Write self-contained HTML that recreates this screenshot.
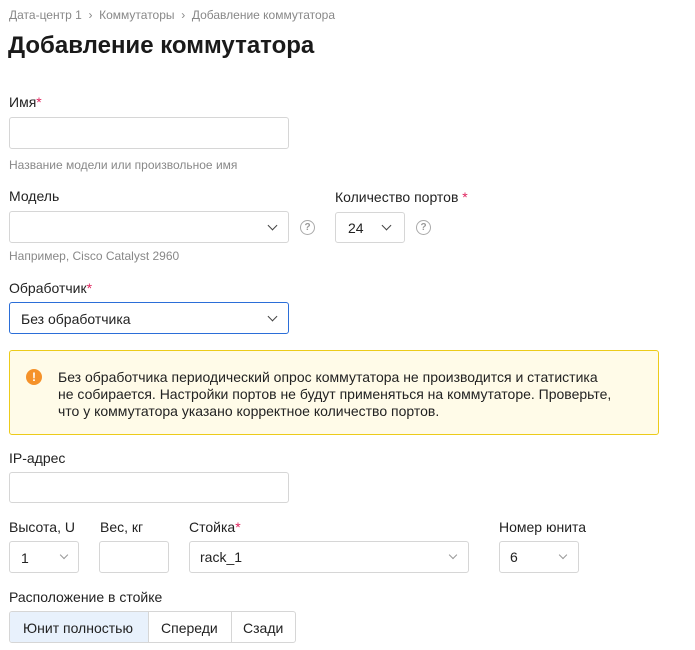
<!DOCTYPE html>
<html><head><meta charset="utf-8"><style>
*{box-sizing:border-box;margin:0;padding:0}
body{width:695px;height:650px;background:#fff;font-family:"Liberation Sans","DejaVu Sans",sans-serif;color:#222;position:relative;overflow:hidden}
.a{position:absolute;white-space:nowrap}
.lbl{font-size:14px;color:#222}
.req{color:#e0245e}
.hint{font-size:12px;color:#888}
.box{position:absolute;border:1px solid #d6d6d6;border-radius:3px;background:#fff}
.chev{position:absolute;width:7px;height:7px;border-right:1.1px solid #444;border-bottom:1.1px solid #444;transform:rotate(45deg)}
.chev.l{border-color:#999;width:6px;height:6px}
.q{position:absolute;width:15px;height:15px;border:1.3px solid #aaa;border-radius:50%;font-size:10px;color:#999;text-align:center;line-height:13px;font-weight:bold}
.val{position:absolute;font-size:14px;color:#222}
</style></head><body>
<div class="a" style="left:9px;top:8px;font-size:12px;color:#888">Дата-центр 1 &nbsp;›&nbsp; Коммутаторы &nbsp;›&nbsp; Добавление коммутатора</div>
<div class="a" style="left:8px;top:32px;font-size:24px;font-weight:bold;color:#1a1a1a">Добавление коммутатора</div>

<div class="a lbl" style="left:9px;top:94px">Имя<span class="req">*</span></div>
<div class="box" style="left:9px;top:117px;width:280px;height:32px"></div>
<div class="a hint" style="left:9px;top:158px">Название модели или произвольное имя</div>

<div class="a lbl" style="left:9px;top:188px">Модель</div>
<div class="box" style="left:9px;top:211px;width:280px;height:32px"><div class="chev" style="left:259px;top:10px"></div></div>
<div class="q" style="left:300px;top:220px">?</div>
<div class="a hint" style="left:9px;top:249px">Например, Cisco Catalyst 2960</div>

<div class="a lbl" style="left:335px;top:189px">Количество портов <span class="req">*</span></div>
<div class="box" style="left:335px;top:212px;width:70px;height:31px"><span class="val" style="left:12px;top:7px">24</span><div class="chev" style="left:47px;top:9px"></div></div>
<div class="q" style="left:416px;top:220px">?</div>

<div class="a lbl" style="left:9px;top:280px">Обработчик<span class="req">*</span></div>
<div class="box" style="left:9px;top:302px;width:280px;height:32px;border-color:#2b6ed8"><span class="val" style="left:11px;top:8px">Без обработчика</span><div class="chev" style="left:259px;top:10px"></div></div>

<div class="a" style="left:9px;top:350px;width:650px;height:85px;background:#fffbe8;border:1px solid #eccb1a;border-radius:3px"></div>
<div class="a" style="left:26px;top:369px;width:16px;height:16px;border-radius:50%;background:#f5922a;color:#fff;font-size:12px;font-weight:bold;text-align:center;line-height:16px">!</div>
<div class="a" style="left:58px;top:369px;font-size:14px;line-height:17px;color:#222">Без обработчика периодический опрос коммутатора не производится и статистика<br>не собирается. Настройки портов не будут применяться на коммутаторе. Проверьте,<br>что у коммутатора указано корректное количество портов.</div>

<div class="a lbl" style="left:9px;top:450px">IP-адрес</div>
<div class="box" style="left:9px;top:472px;width:280px;height:31px"></div>

<div class="a lbl" style="left:9px;top:519px">Высота, U</div>
<div class="a lbl" style="left:100px;top:519px">Вес, кг</div>
<div class="a lbl" style="left:189px;top:519px">Стойка<span class="req">*</span></div>
<div class="a lbl" style="left:499px;top:519px">Номер юнита</div>
<div class="box" style="left:9px;top:541px;width:70px;height:32px"><span class="val" style="left:11px;top:8px">1</span><div class="chev l" style="left:51px;top:10px"></div></div>
<div class="box" style="left:99px;top:541px;width:70px;height:32px"></div>
<div class="box" style="left:189px;top:541px;width:280px;height:32px"><span class="val" style="left:10px;top:7px">rack_1</span><div class="chev l" style="left:260px;top:10px"></div></div>
<div class="box" style="left:499px;top:541px;width:80px;height:32px"><span class="val" style="left:10px;top:7px">6</span><div class="chev l" style="left:60px;top:10px"></div></div>

<div class="a lbl" style="left:9px;top:589px">Расположение в стойке</div>
<div class="box" style="left:9px;top:611px;width:287px;height:32px;overflow:hidden">
<div style="position:absolute;left:0;top:0;width:139px;height:30px;background:#e8f1fc;border-right:1px solid #d6d6d6"></div>
<div style="position:absolute;left:221px;top:0;width:1px;height:30px;background:#d6d6d6"></div>
<span class="val" style="left:13px;top:8px">Юнит полностью</span>
<span class="val" style="left:151px;top:8px">Спереди</span>
<span class="val" style="left:233px;top:8px">Сзади</span>
</div>
</body></html>
